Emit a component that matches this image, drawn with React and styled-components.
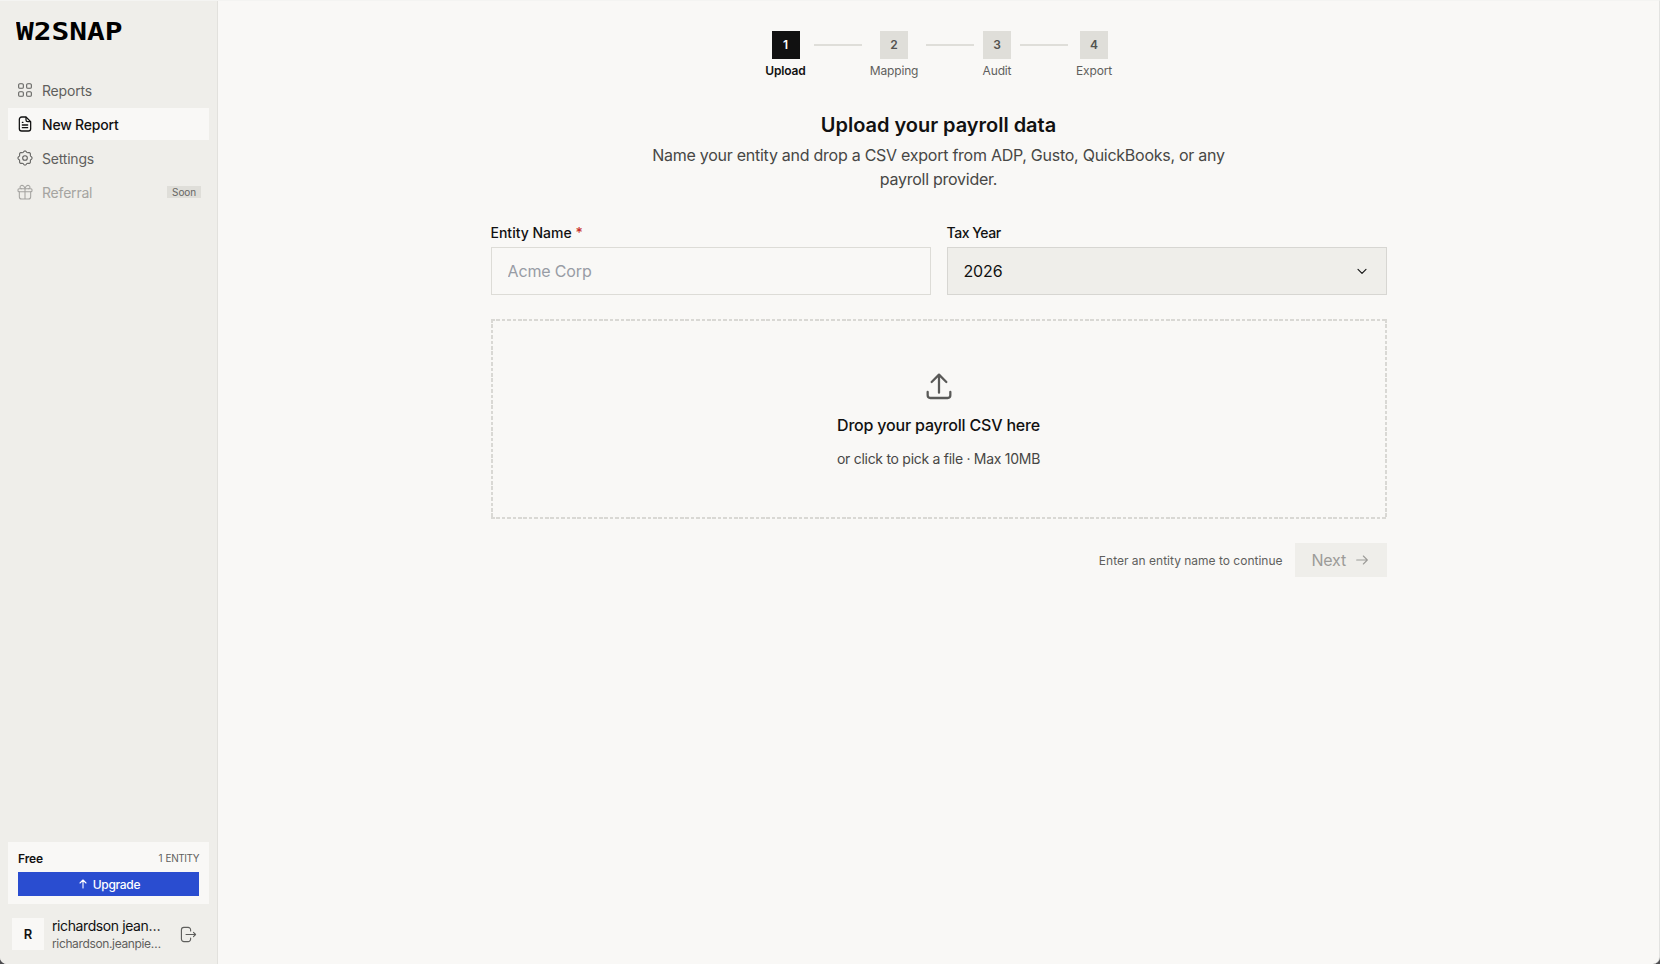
import React, { useState } from 'react';
import styled, { createGlobalStyle, css } from 'styled-components';

const colour = {
  background: '#f9f8f6',
  sidebar: '#efeeea',
  border: '#dddcd7',
  muted: '#dfded9',
  black: '#111111',
  text: '#474745',
  grey: '#5f5f5d',
  blue: '#2a4dd0',
  red: '#c8322d',
};

const GlobalStyle = createGlobalStyle`
  * {
    box-sizing: border-box;
  }

  body {
    margin: 0;
    background: #4d4d50;
    color: ${colour.black};
    font-family: Inter, "Open Sans", sans-serif;
  }

  button, input {
    font-family: inherit;
  }
`;

const AppContainer = styled.div`
  display: flex;
  height: 100vh;
  overflow: hidden;
  background: ${colour.background};
  border-top: 1px solid #f4f4f2;
  border-right: 1px solid #e3e3e1;
  border-radius: 0 0 7px 7px;
`;

const Sidebar = styled.aside`
  display: flex;
  flex-direction: column;
  flex-shrink: 0;
  width: 218px;
  padding: 0 8px 12px;
  background: ${colour.sidebar};
  border-right: 1px solid #e2e1dd;
`;

const Logo = styled.div`
  height: 62px;
  margin: 0 0 11px 8px;
  font: bold 24px/62px "DejaVu Sans Mono", monospace;
  color: #000;
  transform: scaleX(1.23);
  transform-origin: left;
`;

const Nav = styled.nav`
  display: flex;
  flex-direction: column;
  gap: 2px;
`;

const NavItem = styled.a`
  display: flex;
  align-items: center;
  height: 32px;
  padding: 0 8px 0 9px;
  gap: 9px;
  font-size: 14px;
  letter-spacing: -0.2px;
  color: ${colour.grey};

  ${props => props.$active && css`
    background: ${colour.background};
    color: ${colour.black};
    font-weight: 500;
  `}

  ${props => props.$disabled && css`
    color: #a5a4a1;
  `}
`;

const Badge = styled.span`
  margin-left: auto;
  padding: 0 5px;
  background: ${colour.muted};
  color: #666664;
  font-size: 10px;
  line-height: 12px;
  letter-spacing: -0.1px;
`;

const Icon = styled.svg.attrs({ viewBox: '0 0 24 24' })`
  flex-shrink: 0;
  width: ${props => props.$size || 16}px;
  height: ${props => props.$size || 16}px;
  fill: none;
  stroke: currentColor;
  stroke-width: ${props => props.$stroke || 1.6};
  stroke-linecap: round;
  stroke-linejoin: round;
`;

const PlanCard = styled.div`
  margin-top: auto;
  padding: 8px 10px;
  background: ${colour.background};
`;

const PlanHeader = styled.div`
  display: flex;
  justify-content: space-between;
  align-items: center;
  height: 16px;
  margin-bottom: 6px;
`;

const PlanName = styled.span`
  font-size: 12px;
  font-weight: 600;
  letter-spacing: -0.1px;
`;

const PlanLimit = styled.span`
  font-size: 10px;
  letter-spacing: -0.45px;
  word-spacing: 1px;
  color: ${colour.grey};
`;

const UpgradeButton = styled.button`
  display: flex;
  justify-content: center;
  align-items: center;
  width: 100%;
  height: 24px;
  padding: 0;
  gap: 4px;
  border: 0;
  background: ${colour.blue};
  color: white;
  font-size: 12px;
  font-weight: 500;
  letter-spacing: -0.3px;
`;

const Account = styled.div`
  display: flex;
  align-items: center;
  margin-top: 12px;
  padding: 0 12px 0 4px;
`;

const Avatar = styled.div`
  width: 32px;
  height: 32px;
  margin-right: 8px;
  background: ${colour.background};
  font-size: 13px;
  font-weight: 600;
  line-height: 32px;
  text-align: center;
`;

const AccountText = styled.div`
  flex: 1;
  white-space: nowrap;
`;

const AccountName = styled.div`
  font-size: 14px;
  line-height: 19px;
  letter-spacing: -0.4px;
`;

const AccountEmail = styled.div`
  font-size: 12px;
  line-height: 17px;
  letter-spacing: -0.36px;
  color: ${colour.grey};
`;

const LogoutButton = styled.button`
  display: flex;
  padding: 0;
  border: 0;
  background: none;
  color: ${colour.grey};
`;

const Main = styled.main`
  display: flex;
  flex: 1;
  flex-direction: column;
  align-items: center;
  padding-top: 30px;
`;

const Stepper = styled.ol`
  display: flex;
  gap: 8px;
  margin: 0;
  padding: 0;
  list-style: none;
`;

const Step = styled.li`
  display: flex;
  flex-direction: column;
  align-items: center;
  width: ${props => props.$width}px;
`;

const StepNumber = styled.span`
  width: 28px;
  height: 28px;
  background: ${props => props.$active ? colour.black : colour.muted};
  color: ${props => props.$active ? 'white' : '#52524f'};
  font-size: 12px;
  font-weight: 600;
  line-height: 28px;
  text-align: center;
`;

const StepLabel = styled.span`
  margin-top: 4px;
  font-size: 12px;
  line-height: 16px;
  letter-spacing: -0.15px;
  white-space: nowrap;
  color: ${props => props.$active ? colour.black : colour.grey};
  font-weight: ${props => props.$active ? 600 : 400};
`;

const StepLine = styled.li`
  width: 48px;
  height: 2px;
  margin-top: 13px;
  background: ${colour.muted};
`;

const Title = styled.h1`
  margin: 32px 0 0;
  font-size: 20px;
  font-weight: 600;
  line-height: 28px;
  letter-spacing: -0.03px;
`;

const Subtitle = styled.p`
  width: 600px;
  margin: 4px 0 0;
  font-size: 16px;
  line-height: 24px;
  letter-spacing: -0.26px;
  text-align: center;
  color: ${colour.text};
`;

const Form = styled.form`
  width: 896px;
  margin-top: 32px;
`;

const Fields = styled.div`
  display: grid;
  grid-template-columns: 1fr 1fr;
  gap: 16px;
`;

const Label = styled.label`
  display: block;
  height: 20px;
  margin-bottom: 4px;
  font-size: 14px;
  font-weight: 500;
  line-height: 20px;
  letter-spacing: ${props => props.$tracking || 0}px;
`;

const Required = styled.span`
  color: ${colour.red};
`;

const Input = styled.input`
  display: block;
  width: 100%;
  height: 48px;
  padding: 0 16px;
  border: 1px solid ${colour.border};
  border-radius: 0;
  outline: 0;
  background: transparent;
  font-size: 16px;
  letter-spacing: -0.15px;

  &::placeholder {
    color: #989ca5;
  }
`;

const Select = styled.button`
  display: flex;
  justify-content: space-between;
  align-items: center;
  width: 100%;
  height: 48px;
  padding: 0 16px;
  border: 1px solid #d7d6d2;
  border-radius: 0;
  background: ${colour.sidebar};
  color: ${colour.black};
  font-size: 16px;
  letter-spacing: -0.15px;
`;

const dash = direction => css`repeating-linear-gradient(${direction}, #d9d8d4 0 3.5px, transparent 3.5px 5.4px)`;

// short dashes, tighter than the native dashed border
const DropZone = styled.div`
  display: flex;
  flex-direction: column;
  align-items: center;
  height: 200px;
  margin-top: 24px;
  padding-top: 51px;
  background:
    ${dash('90deg')} top / 100% 2px no-repeat,
    ${dash('90deg')} bottom / 100% 2px no-repeat,
    ${dash('180deg')} left / 2px 100% no-repeat,
    ${dash('180deg')} right / 2px 100% no-repeat;
`;

const DropTitle = styled.div`
  margin-top: 11px;
  font-size: 16px;
  font-weight: 500;
  line-height: 24px;
  letter-spacing: -0.19px;
`;

const DropHint = styled.div`
  margin-top: 12px;
  font-size: 14px;
  line-height: 20px;
  letter-spacing: -0.28px;
  color: ${colour.text};
`;

const Actions = styled.div`
  display: flex;
  justify-content: flex-end;
  align-items: center;
  gap: 12px;
  margin-top: 24px;
`;

const ActionHint = styled.span`
  font-size: 12px;
  color: ${colour.grey};
`;

const NextButton = styled.button`
  display: flex;
  align-items: center;
  justify-content: space-between;
  width: 92px;
  height: 34px;
  padding: 0 17px;
  border: 0;
  background: ${colour.sidebar};
  color: #9c9b98;
  font-size: 16px;
  letter-spacing: -0.2px;
`;

const GridIcon = () => (
  <Icon>
    <rect x="2.5" y="2.5" width="7" height="7" rx="1.8" />
    <rect x="14.5" y="2.5" width="7" height="7" rx="1.8" />
    <rect x="2.5" y="14.5" width="7" height="7" rx="1.8" />
    <rect x="14.5" y="14.5" width="7" height="7" rx="1.8" />
  </Icon>
);

const FileIcon = () => (
  <Icon $stroke={1.9}>
    <path d="M13.5 1.500H7A3.500 3.500 0 0 0 3.500 5v14A3.500 3.500 0 0 0 7 22.500h10a3.500 3.500 0 0 0 3.500-3.500V8.500z" />
    <path d="M13.5 2v4a2.500 2.500 0 0 0 2.500 2.500h4M8 9.500h1M8 13.500h8M8 17.500h8" />
  </Icon>
);

// scalloped ring with eight teeth
const gearPoints = Array.from({ length: 96 }, (_, i) => {
  const angle = (i / 96) * Math.PI * 2;
  const radius = 9.7 + 0.9 * Math.cos(angle * 8);
  return `${(12 + radius * Math.cos(angle)).toFixed(2)},${(12 + radius * Math.sin(angle)).toFixed(2)}`;
}).join(' ');

const SettingsIcon = () => (
  <Icon>
    <circle cx="12" cy="12" r="3.5" />
    <polygon points={gearPoints} />
  </Icon>
);

const GiftIcon = () => (
  <Icon>
    <path d="M3.500 11.500v7.500A3.500 3.500 0 0 0 7 22.500h10a3.500 3.500 0 0 0 3.500-3.500v-7.500M12 7v15" />
    <rect x="1.500" y="7" width="21" height="4.500" rx="1.500" />
    <path d="M12 7C11 3 8.500 1.500 6.500 2.200 3.500 3.300 4 7 7 7M12 7c1-4 3.500-5.500 5.500-4.800C20.500 3.300 20 7 17 7" />
  </Icon>
);

const navItems = [
  { text: 'Reports', icon: GridIcon },
  { text: 'New Report', icon: FileIcon, active: true },
  { text: 'Settings', icon: SettingsIcon },
  { text: 'Referral', icon: GiftIcon, disabled: true },
];

const steps = [
  { text: 'Upload', width: 41 },
  { text: 'Mapping', width: 48 },
  { text: 'Audit', width: 30 },
  { text: 'Export', width: 36 },
];

const App = () => {
  const [entityName, setEntityName] = useState('');

  return (
    <AppContainer>
      <GlobalStyle />
      <Sidebar>
        <Logo>W2SNAP</Logo>
        <Nav>
          {navItems.map(({ text, icon: ItemIcon, active, disabled }) => (
            <NavItem key={text} $active={active} $disabled={disabled}>
              <ItemIcon />
              {text}
              {disabled && <Badge>Soon</Badge>}
            </NavItem>
          ))}
        </Nav>
        <PlanCard>
          <PlanHeader>
            <PlanName>Free</PlanName>
            <PlanLimit>1 ENTITY</PlanLimit>
          </PlanHeader>
          <UpgradeButton>
            <Icon $size={12} $stroke={2.2}>
              <path d="M12 20V4M6 10l6-6 6 6" />
            </Icon>
            Upgrade
          </UpgradeButton>
        </PlanCard>
        <Account>
          <Avatar>R</Avatar>
          <AccountText>
            <AccountName>richardson jean…</AccountName>
            <AccountEmail>richardson.jeanpie…</AccountEmail>
          </AccountText>
          <LogoutButton>
            <Icon $size={17}>
              <path d="M15 7V5.500A3.500 3.500 0 0 0 11.500 2h-6A3.500 3.500 0 0 0 2 5.500v13A3.500 3.500 0 0 0 5.500 22h6a3.500 3.500 0 0 0 3.500-3.500V17" />
              <path d="M8.500 12h13.500M19 9l3 3-3 3" />
            </Icon>
          </LogoutButton>
        </Account>
      </Sidebar>
      <Main>
        <Stepper>
          {steps.map(({ text, width }, index) => (
            <React.Fragment key={text}>
              {index > 0 && <StepLine />}
              <Step $width={width}>
                <StepNumber $active={index === 0}>{index + 1}</StepNumber>
                <StepLabel $active={index === 0}>{text}</StepLabel>
              </Step>
            </React.Fragment>
          ))}
        </Stepper>
        <Title>Upload your payroll data</Title>
        <Subtitle>
          Name your entity and drop a CSV export from ADP, Gusto, QuickBooks, or any payroll provider.
        </Subtitle>
        <Form onSubmit={e => e.preventDefault()}>
          <Fields>
            <div>
              <Label htmlFor="entity">Entity Name <Required>*</Required></Label>
              <Input
                id="entity"
                placeholder="Acme Corp"
                value={entityName}
                onChange={e => setEntityName(e.target.value)}
              />
            </div>
            <div>
              <Label $tracking={-0.45}>Tax Year</Label>
              <Select type="button">
                2026
                <Icon $stroke={1.7}>
                  <path d="M6 9.500l6 6 6-6" />
                </Icon>
              </Select>
            </div>
          </Fields>
          <DropZone>
            <Icon $size={32} $stroke={1.7} color="#5a5a58">
              <path d="M12 17V4M6.500 9L12 3.500 17.500 9" />
              <path d="M3.500 16.500v2.500a2 2 0 0 0 2 2h13a2 2 0 0 0 2-2v-2.500" />
            </Icon>
            <DropTitle>Drop your payroll CSV here</DropTitle>
            <DropHint>or click to pick a file · Max 10MB</DropHint>
          </DropZone>
          <Actions>
            <ActionHint>Enter an entity name to continue</ActionHint>
            <NextButton type="submit" disabled={!entityName}>
              Next
              <Icon>
                <path d="M4 12h16M14 6l6 6-6 6" />
              </Icon>
            </NextButton>
          </Actions>
        </Form>
      </Main>
    </AppContainer>
  );
};

export default App;
